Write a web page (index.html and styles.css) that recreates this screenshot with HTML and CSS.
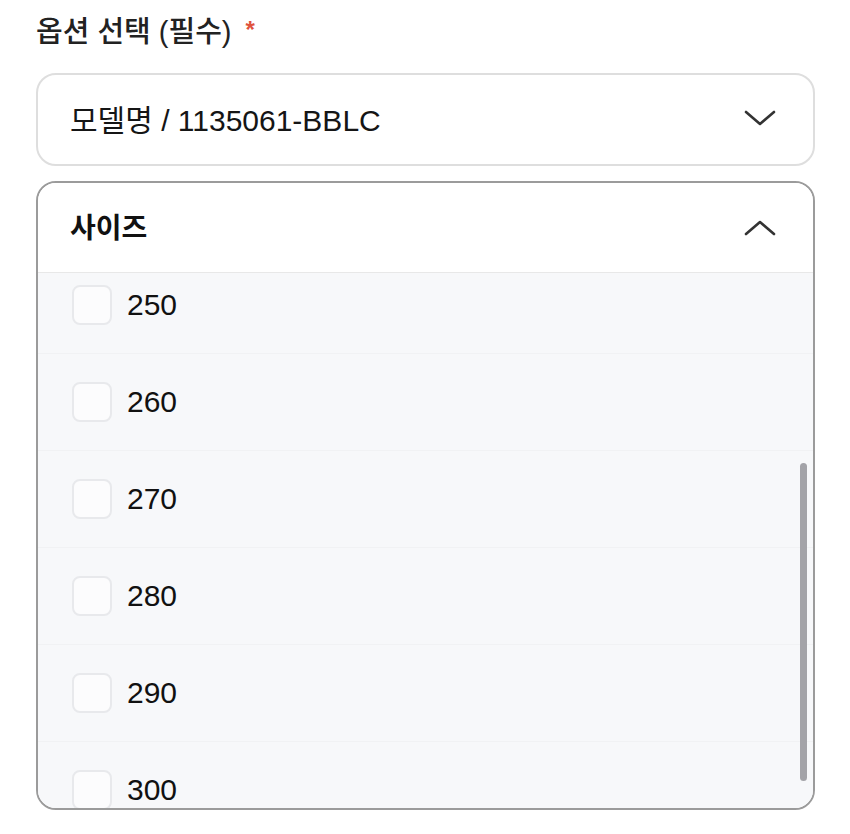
FILE: index.html
```html
<!DOCTYPE html>
<html lang="ko">
<head>
<meta charset="UTF-8">
<meta name="viewport" content="width=device-width, initial-scale=1.0">
<title>옵션 선택</title>
<link rel="stylesheet" href="styles.css">
</head>
<body>

<div class="container">

<div class="label">옵션 선택 (필수)<span class="req">*</span></div>

<div class="select">
<span>모델명 / 1135061-BBLC</span>
<svg class="chev" width="32" height="18" viewBox="0 0 32 18"><polyline points="2,3 16,15 30,3" fill="none" stroke="#333" stroke-width="2.6" stroke-linecap="round" stroke-linejoin="round"/></svg>
</div>

<div class="panel">

<div class="panel-head">
<span>사이즈</span>
<svg class="chev" width="32" height="18" viewBox="0 0 32 18"><polyline points="2,15 16,3 30,15" fill="none" stroke="#333" stroke-width="2.6" stroke-linecap="round" stroke-linejoin="round"/></svg>
</div>

<div class="list">
<div class="rows">
<div class="row"><span class="box"></span>250</div>
<div class="row"><span class="box"></span>260</div>
<div class="row"><span class="box"></span>270</div>
<div class="row"><span class="box"></span>280</div>
<div class="row"><span class="box"></span>290</div>
<div class="row"><span class="box"></span>300</div>
</div>
<div class="scrollbar"></div>
</div>

</div>

</div>

</body>
</html>
```

FILE: styles.css
```css
body{
margin:0;
background:#fff;
color:#111;
font-family:"Liberation Sans","Noto Sans CJK KR",sans-serif;
}

.container{
width:779px;
margin-left:36px;
padding-top:14px;
}

.label{
height:36px;
font-size:29px;
line-height:36px;
color:#222;
font-weight:500;
display:flex;
align-items:center;
}

.req{
color:#e0533d;
font-size:24px;
font-weight:bold;
margin-left:14px;
position:relative;
top:-2px;
}

.select{
margin-top:23px;
height:89px;
border:2px solid #dedede;
border-radius:20px;
display:flex;
align-items:center;
justify-content:space-between;
padding:0 37px 4px 32px;
box-sizing:content-box;
font-size:30px;
color:#151515;
}

.select{
height:85px;
}

.panel{
margin-top:15px;
height:625px;
border:2px solid #9b9b9b;
border-radius:20px;
overflow:hidden;
display:flex;
flex-direction:column;
}

.panel-head{
height:90px;
flex:none;
border-bottom:1px solid #e8e8e8;
display:flex;
align-items:center;
justify-content:space-between;
padding:0 37px 0 32px;
box-sizing:border-box;
font-size:28px;
font-weight:bold;
background:#fff;
}

.panel-head span{
margin-bottom:4px;
}

.list{
flex:1;
position:relative;
overflow:hidden;
background:#f7f8fa;
}

.rows{
margin-top:-16px;
}

.row{
height:97px;
border-bottom:1px solid #f1f2f4;
display:flex;
align-items:center;
gap:15px;
padding-left:34px;
font-size:30px;
color:#111;
box-sizing:border-box;
}

.box{
width:40px;
height:40px;
box-sizing:border-box;
border:2px solid #e8e9ec;
border-radius:8px;
background:#fcfcfd;
}

.scrollbar{
position:absolute;
top:190px;
right:6px;
width:7px;
height:318px;
border-radius:4px;
background:#a3a3a8;
}
```
